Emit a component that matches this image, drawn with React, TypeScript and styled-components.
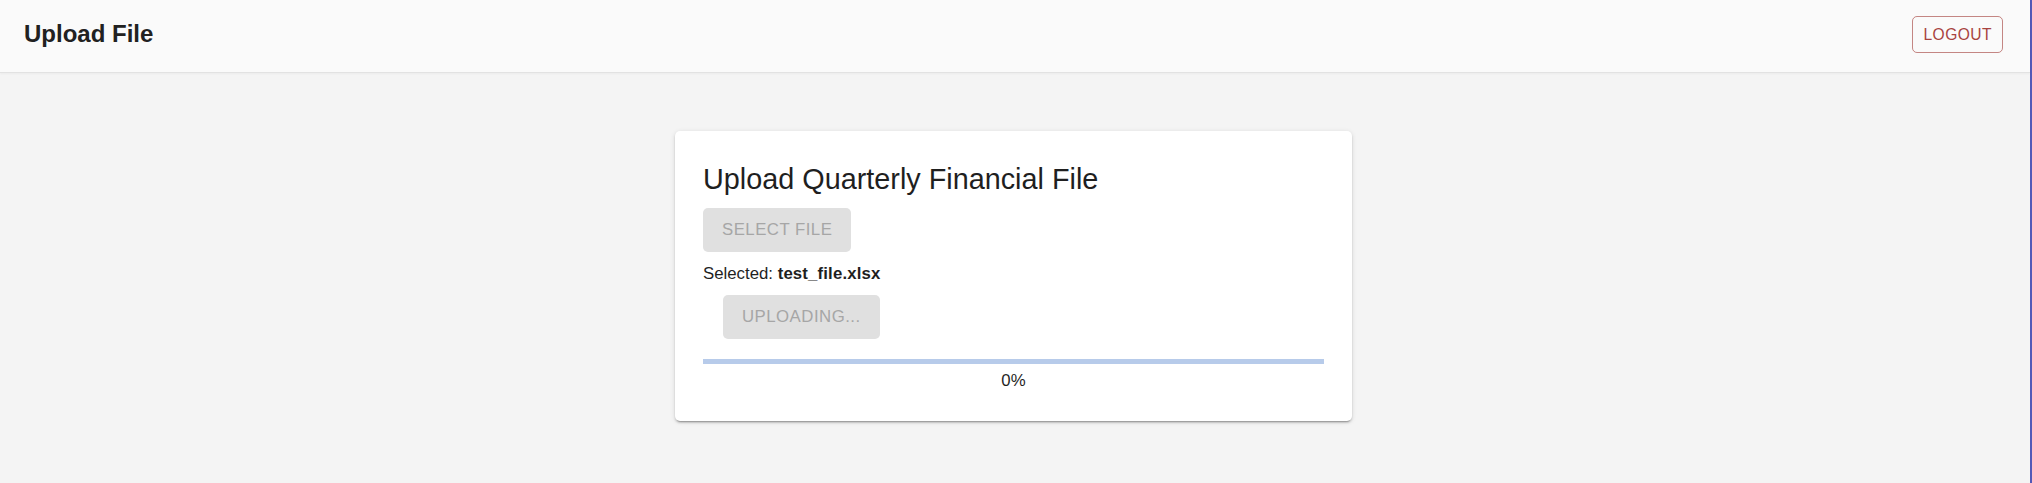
import React from "react";
import styled, { createGlobalStyle } from "styled-components";

const GlobalStyle = createGlobalStyle`
  html, body {
    margin: 0;
    padding: 0;
    background: #f4f4f4;
    font-family: "Liberation Sans", Arial, sans-serif;
    color: rgba(0, 0, 0, 0.87);
  }
`;

const Shell = styled.div`
  min-height: 100vh;
  box-sizing: border-box;
  border-right: 2px solid #5259b7;
  background: #f4f4f4;
`;

const Header = styled.header`
  height: 73px;
  box-sizing: border-box;
  padding: 0 27px 3px 24px;
  display: flex;
  align-items: center;
  justify-content: space-between;
  background: #fafafa;
  border-bottom: 1px solid #e2e2e2;
  box-shadow: 0 1px 2px rgba(0, 0, 0, 0.04);
`;

const PageTitle = styled.h1`
  margin: 0;
  font-size: 24px;
  font-weight: 700;
  line-height: 1.2;
  color: #212121;
`;

const OutlinedButton = styled.button`
  height: 37px;
  padding: 0 10px;
  border: 1.2px solid rgba(168, 72, 68, 0.65);
  border-radius: 5px;
  background: transparent;
  color: #a8433f;
  font-family: inherit;
  font-size: 15.6px;
  letter-spacing: 0.45px;
  text-transform: uppercase;
  cursor: pointer;
`;

const Main = styled.main`
  display: flex;
  justify-content: center;
  padding: 58px 3px 0 0;
`;

const Card = styled.section`
  width: 677px;
  box-sizing: border-box;
  padding: 29px 28px 28px;
  background: #fff;
  border-radius: 5px;
  box-shadow: 0 3px 1px -2px rgba(0, 0, 0, 0.2), 0 2px 2px 0 rgba(0, 0, 0, 0.14),
    0 1px 5px 0 rgba(0, 0, 0, 0.12);
`;

const CardTitle = styled.h2`
  margin: 0 0 10px;
  font-size: 28.8px;
  font-weight: 400;
  line-height: 38.4px;
  color: #1f1f1f;
`;

const ActionButton = styled.button<{ $indent?: boolean }>`
  display: block;
  height: 44px;
  padding: 0 19px;
  margin-left: ${(p) => (p.$indent ? "20px" : "0")};
  border: none;
  border-radius: 5px;
  background: #e0e0e0;
  color: #a6a6a6;
  font-family: inherit;
  font-size: 16.8px;
  letter-spacing: 0.48px;
  text-transform: uppercase;
  cursor: default;
`;

const SelectedLine = styled.p`
  margin: 10px 0 9px;
  font-size: 16.8px;
  line-height: 24px;
  color: #1f1f1f;

  strong {
    font-weight: 700;
    letter-spacing: 0.15px;
  }
`;

const Track = styled.div`
  height: 5px;
  margin-top: 20px;
  background: #b7cbea;
  overflow: hidden;
`;

const Bar = styled.div`
  height: 100%;
  background: #1976d2;
`;

const Percent = styled.div`
  margin-top: 5px;
  text-align: center;
  font-size: 16.8px;
  line-height: 24px;
  color: #1f1f1f;
`;

export default function App() {
  const progress = 0;
  return (
    <Shell>
      <GlobalStyle />
      <Header>
        <PageTitle>Upload File</PageTitle>
        <OutlinedButton>Logout</OutlinedButton>
      </Header>
      <Main>
        <Card>
          <CardTitle>Upload Quarterly Financial File</CardTitle>
          <ActionButton disabled>Select File</ActionButton>
          <SelectedLine>
            Selected: <strong>test_file.xlsx</strong>
          </SelectedLine>
          <ActionButton $indent disabled>
            Uploading...
          </ActionButton>
          <Track>
            <Bar style={{ width: `${progress}%` }} />
          </Track>
          <Percent>{progress}%</Percent>
        </Card>
      </Main>
    </Shell>
  );
}
